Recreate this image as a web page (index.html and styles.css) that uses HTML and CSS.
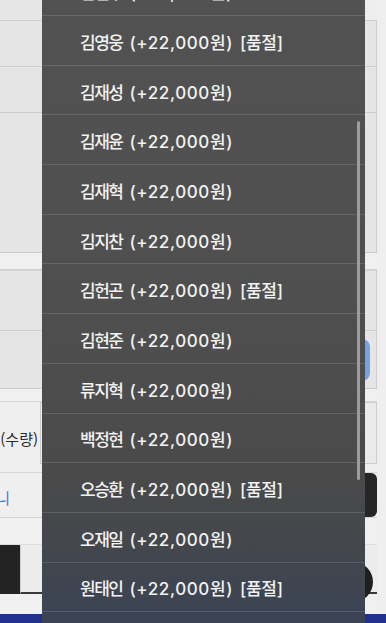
FILE: index.html
```html
<!DOCTYPE html>
<html lang="ko">
<head>
<meta charset="utf-8">
<title>옵션 선택</title>
<link rel="stylesheet" href="styles.css">
</head>
<body>
<div class="page">
  <div class="topbar"></div>
  <div class="box h46"></div>
  <div class="box h46"></div>
  <div class="box h140"></div>
  <div class="gap h16"></div>
  <div class="box h62 thick"></div>
  <div class="box h58 btnbox"><span class="bluebtn"></span></div>
  <div class="gap h12"></div>
  <div class="qtyrow">
    <span class="lbl">옵션(수량)</span>
    <div class="qbox"></div>
  </div>
  <div class="cartrow">
    <span class="link">장바구니</span>
    <span class="darkbtn"></span>
  </div>
  <div class="gap h26"></div>
  <div class="btnrow">
    <span class="blackbtn"></span>
    <span class="whitebtn"></span>
  </div>
  <div class="gap h20"></div>
  <div class="navy"></div>
</div>
<div class="fab"></div>

<div class="sheet">
  <ul class="list">
    <li class="item"><span class="nm">김연우</span> <span class="pr">(+22,000원)</span></li>
    <li class="item"><span class="nm">김영웅</span> <span class="pr">(+22,000원)</span> <span class="so">[품절]</span></li>
    <li class="item"><span class="nm">김재성</span> <span class="pr">(+22,000원)</span></li>
    <li class="item"><span class="nm">김재윤</span> <span class="pr">(+22,000원)</span></li>
    <li class="item"><span class="nm">김재혁</span> <span class="pr">(+22,000원)</span></li>
    <li class="item"><span class="nm">김지찬</span> <span class="pr">(+22,000원)</span></li>
    <li class="item"><span class="nm">김헌곤</span> <span class="pr">(+22,000원)</span> <span class="so">[품절]</span></li>
    <li class="item"><span class="nm">김현준</span> <span class="pr">(+22,000원)</span></li>
    <li class="item"><span class="nm">류지혁</span> <span class="pr">(+22,000원)</span></li>
    <li class="item"><span class="nm">백정현</span> <span class="pr">(+22,000원)</span></li>
    <li class="item"><span class="nm">오승환</span> <span class="pr">(+22,000원)</span> <span class="so">[품절]</span></li>
    <li class="item"><span class="nm">오재일</span> <span class="pr">(+22,000원)</span></li>
    <li class="item"><span class="nm">원태인</span> <span class="pr">(+22,000원)</span> <span class="so">[품절]</span></li>
    <li class="item"><span class="nm">이재현</span> <span class="pr">(+22,000원)</span></li>
  </ul>
  <div class="scroll"></div>
</div>
</body>
</html>
```

FILE: styles.css
```css
* { box-sizing: border-box; }
html, body {
  margin: 0;
  padding: 0;
  width: 386px;
  height: 623px;
  overflow: hidden;
  background: #efefef;
  font-family: "Noto Sans CJK KR", "Noto Sans", sans-serif;
}
.page {
  display: flex;
  flex-direction: column;
  width: 388px;
  height: 623px;
  padding-right: 9px;
  margin-left: -2px;
}
.topbar {
  height: 21px;
  background: linear-gradient(to right, #e6e6e6, #ededed);
  border-bottom: 1px solid #cfcfcf;
}
.box {
  background: #e5e5e5;
  border: 1px solid #cdcdcd;
  border-top: none;
}
.h46 { height: 46px; }
.h140 { height: 140px; }
.h62 { height: 62px; }
.h58 { height: 58px; }
.thick { border-top: 2px solid #d2d2d2; }
.gap { background: #f0f0f0; }
.h16 { height: 16px; }
.h12 { height: 12px; }
.h26 { height: 26px; }
.h20 { height: 20px; }
.btnbox {
  display: flex;
  justify-content: flex-end;
  align-items: center;
  padding-right: 6px;
}
.bluebtn {
  width: 40px;
  height: 42px;
  border-radius: 8px;
  background: #76a3e0;
}
.qtyrow {
  height: 72px;
  display: flex;
  align-items: flex-start;
  border-top: 1px solid #d6d6d6;
  border-bottom: 1px solid #d6d6d6;
  background: #efefef;
}
.lbl {
  width: 42px;
  flex: none;
  display: flex;
  justify-content: flex-end;
  white-space: nowrap;
  font-size: 15px;
  line-height: 20px;
  color: #2a2a2a;
  margin-top: 27px;
  padding-right: 2px;
}
.qbox {
  flex: 1;
  height: 62px;
  background: #eaeaea;
  border: 1px solid #cdcdcd;
}
.cartrow {
  height: 45px;
  display: flex;
  align-items: flex-start;
  justify-content: space-between;
  border-bottom: 1px solid #d4d4d4;
  background: #efefef;
}
.link {
  width: 12px;
  display: flex;
  justify-content: flex-end;
  white-space: nowrap;
  font-size: 15px;
  line-height: 20px;
  color: #3b78d2;
  margin-top: 15px;
}
.darkbtn {
  width: 60px;
  height: 44px;
  border-radius: 0 6px 6px 0;
  background: #262626;
}
.btnrow {
  height: 50px;
  display: flex;
  border-top: 1px solid #dcdcdc;
}
.blackbtn {
  width: 22px;
  background: #232323;
}
.whitebtn {
  flex: 1;
  background: #ececec;
  border-left: 1px solid #cfcfcf;
  border-bottom: 2px solid #3a3a3a;
}
.navy {
  flex: 1;
  background: #22318e;
  margin-right: -9px;
}
.fab {
  position: absolute;
  left: 333px;
  top: 562px;
  width: 40px;
  height: 40px;
  border-radius: 50%;
  background: #1f1f1f;
}
.sheet {
  position: absolute;
  left: 42px;
  top: -34.7px;
  width: 323px;
  height: 670px;
  overflow: hidden;
  background: linear-gradient(to bottom, #525252 0%, #4f4f4f 50%, #4a4a4a 76%, #44474c 86%, #3b4354 98%);
}
.list {
  list-style: none;
  margin: 0;
  padding: 0;
}
.item {
  height: 49.7px;
  border-top: 1px solid rgba(255, 255, 255, 0.13);
  display: flex;
  align-items: center;
  gap: 7px;
  padding: 2px 0 0 38px;
  font-family: "Inter", "Noto Sans CJK KR", sans-serif;
  font-size: 17px;
  font-weight: 500;
  color: #f2f2f2;
  white-space: nowrap;
}
.nm {
  letter-spacing: -1.5px;
}
.pr {
  letter-spacing: 0.6px;
}
.so {
  letter-spacing: -0.3px;
}
.scroll {
  position: absolute;
  left: 315px;
  top: 156px;
  width: 3px;
  height: 359px;
  border-radius: 2px;
  background: #9c9c9c;
}
```
